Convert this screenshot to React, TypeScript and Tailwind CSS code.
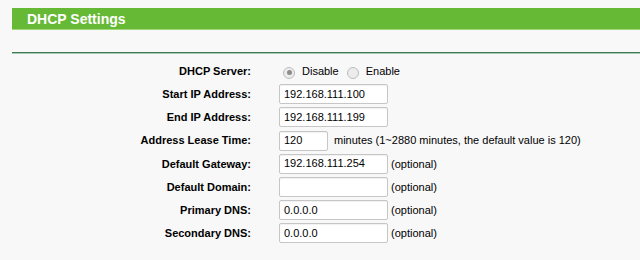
import React from "react";

const Input = ({ value, w = "w-[109px]" }: { value: string; w?: string }) => (
  <div
    className={`${w} h-[20px] bg-white border border-[#c6c6c6] rounded-[2px] shadow-[inset_0_1px_1px_rgba(0,0,0,0.06)] flex items-center pl-[4px] text-[11px] text-black leading-none`}
  >
    {value}
  </div>
);

const Radio = ({ checked }: { checked?: boolean }) => (
  <div className="w-[12px] h-[12px] mt-[3px] rounded-full border border-[#bdbdbd] bg-[#ececec] flex items-center justify-center shrink-0">
    {checked && <div className="w-[5px] h-[5px] rounded-full bg-[#8c8c8c]" />}
  </div>
);

const Optional = () => <span className="ml-[3px] text-[11px] text-black">(optional)</span>;

export default function App() {
  const rows: { label: string; control: React.ReactNode }[] = [
    {
      label: "DHCP Server:",
      control: (
        <div className="flex items-center text-[11px] text-black">
          <div className="ml-[4px]">
            <Radio checked />
          </div>
          <span className="ml-[7px]">Disable</span>
          <div className="ml-[8px]">
            <Radio />
          </div>
          <span className="ml-[7px]">Enable</span>
        </div>
      ),
    },
    { label: "Start IP Address:", control: <Input value="192.168.111.100" /> },
    { label: "End IP Address:", control: <Input value="192.168.111.199" /> },
    {
      label: "Address Lease Time:",
      control: (
        <div className="flex items-center">
          <Input value="120" w="w-[49px]" />
          <span className="ml-[6px] text-[11px] text-black whitespace-nowrap">
            minutes (1~2880 minutes, the default value is 120)
          </span>
        </div>
      ),
    },
    {
      label: "Default Gateway:",
      control: (
        <div className="flex items-center">
          <Input value="192.168.111.254" />
          <Optional />
        </div>
      ),
    },
    {
      label: "Default Domain:",
      control: (
        <div className="flex items-center">
          <Input value="" />
          <Optional />
        </div>
      ),
    },
    {
      label: "Primary DNS:",
      control: (
        <div className="flex items-center">
          <Input value="0.0.0.0" />
          <Optional />
        </div>
      ),
    },
    {
      label: "Secondary DNS:",
      control: (
        <div className="flex items-center">
          <Input value="0.0.0.0" />
          <Optional />
        </div>
      ),
    },
  ];

  return (
    <div
      className="w-[640px] h-[260px] bg-[#f8f8f8] overflow-hidden pt-[8px]"
      style={{ fontFamily: '"Liberation Sans", Arial, sans-serif' }}
    >
      <div className="ml-[12px] h-[21px] bg-[#66b934] flex items-center pl-[15px] text-white font-bold text-[14px] leading-none">
        DHCP Settings
      </div>
      <div className="ml-[12px] h-[1px] bg-[#9fd77a]" />
      <div className="ml-[12px] mt-[22px] h-[1px] bg-[#3e7d52]" />
      <div className="ml-[12px] h-[1px] bg-[#a9c7b2]" />
      <div className="mt-[7px] grid grid-cols-[251px_auto] gap-x-[28px] gap-y-[3.2px]">
        {rows.map((r) => (
          <React.Fragment key={r.label}>
            <div className="h-[20px] flex items-center justify-end text-[11px] font-bold text-black whitespace-nowrap">
              {r.label}
            </div>
            <div className="h-[20px] flex items-center">{r.control}</div>
          </React.Fragment>
        ))}
      </div>
    </div>
  );
}
